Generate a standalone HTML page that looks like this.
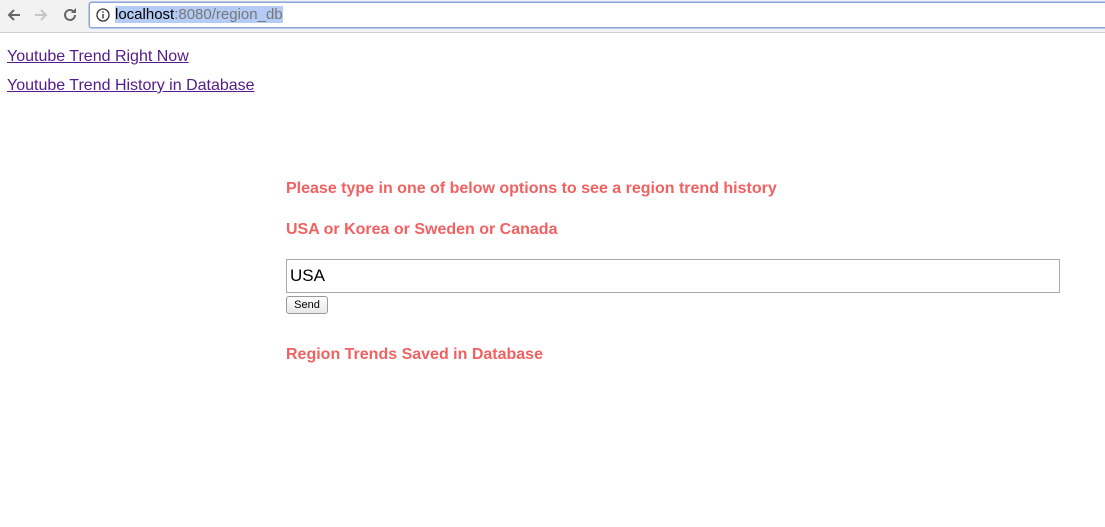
<!DOCTYPE html>
<html><head><meta charset="utf-8"><style>
body{margin:0;width:1105px;height:527px;background:#fff;font-family:"Liberation Sans",sans-serif;position:relative;overflow:hidden}
.bar{position:absolute;left:0;top:0;width:1105px;height:32px;background:#f2f2f2;border-bottom:1px solid #d0d0d0}
.url{position:absolute;left:89px;top:2px;width:1020px;height:24px;border:1px solid #8fa5d6;border-radius:3px;background:#fff;box-shadow:0 0 0 1px #b9c7e8}
.url .t{position:absolute;left:25px;top:3px;font-size:15px;color:#777}
.url .t b{font-weight:normal;color:#000;background:#b4cbf5}
.url .t span{background:#b4cbf5}
a{position:absolute;left:7px;font-size:16px;color:#551a8b;text-decoration:underline}
.h{position:absolute;left:286px;font-size:16px;font-weight:bold;color:#f26161}
.in{position:absolute;left:286px;top:259px;width:772px;height:32px;border:1px solid #aaa;box-sizing:content-box}
.in span{position:absolute;left:3px;top:6px;font-size:17px;color:#000}
.btn{position:absolute;left:286px;top:296px;width:40px;height:16px;border:1px solid #999;border-radius:3px;background:linear-gradient(#fff,#e8e8e8);font-size:11px;text-align:center;line-height:16px}
</style></head><body>
<div class="bar">
<svg style="position:absolute;left:6px;top:7px" width="16" height="16"><path d="M14 8H3M8 3L3 8l5 5" stroke="#666" stroke-width="2" fill="none"/></svg>
<svg style="position:absolute;left:33px;top:7px" width="16" height="16"><path d="M2 8h11M8 3l5 5-5 5" stroke="#c6c6c6" stroke-width="2" fill="none"/></svg>
<svg style="position:absolute;left:61px;top:6px" width="18" height="18"><path d="M14 9a5 5 0 1 1-1.5-3.6" stroke="#666" stroke-width="2" fill="none"/><path d="M15 2v5h-5z" fill="#666"/></svg>
<div class="url">
<svg style="position:absolute;left:6px;top:5px" width="14" height="14"><circle cx="7" cy="7" r="6" stroke="#333" stroke-width="1.3" fill="none"/><rect x="6.3" y="6" width="1.4" height="4.5" fill="#333"/><rect x="6.3" y="3.3" width="1.4" height="1.4" fill="#333"/></svg>
<div class="t"><b>localhost</b><span>:8080/region_db</span></div></div>
</div>
<a style="top:48px">Youtube Trend Right Now</a>
<a style="top:77px">Youtube Trend History in Database</a>
<div class="h" style="top:180px">Please type in one of below options to see a region trend history</div>
<div class="h" style="top:221px">USA or Korea or Sweden or Canada</div>
<div class="in"><span>USA</span></div>
<div class="btn">Send</div>
<div class="h" style="top:346px">Region Trends Saved in Database</div>
</body></html>
